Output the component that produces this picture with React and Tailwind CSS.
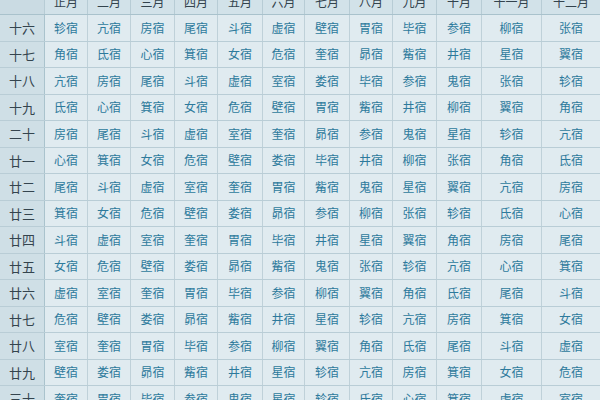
import React from 'react'

const months = ['正月', '二月', '三月', '四月', '五月', '六月', '七月', '八月', '九月', '十月', '十一月', '十二月']

const rows = [
  ['十六', '轸宿 亢宿 房宿 尾宿 斗宿 虚宿 壁宿 胃宿 毕宿 参宿 柳宿 张宿'],
  ['十七', '角宿 氐宿 心宿 箕宿 女宿 危宿 奎宿 昴宿 觜宿 井宿 星宿 翼宿'],
  ['十八', '亢宿 房宿 尾宿 斗宿 虚宿 室宿 娄宿 毕宿 参宿 鬼宿 张宿 轸宿'],
  ['十九', '氐宿 心宿 箕宿 女宿 危宿 壁宿 胃宿 觜宿 井宿 柳宿 翼宿 角宿'],
  ['二十', '房宿 尾宿 斗宿 虚宿 室宿 奎宿 昴宿 参宿 鬼宿 星宿 轸宿 亢宿'],
  ['廿一', '心宿 箕宿 女宿 危宿 壁宿 娄宿 毕宿 井宿 柳宿 张宿 角宿 氐宿'],
  ['廿二', '尾宿 斗宿 虚宿 室宿 奎宿 胃宿 觜宿 鬼宿 星宿 翼宿 亢宿 房宿'],
  ['廿三', '箕宿 女宿 危宿 壁宿 娄宿 昴宿 参宿 柳宿 张宿 轸宿 氐宿 心宿'],
  ['廿四', '斗宿 虚宿 室宿 奎宿 胃宿 毕宿 井宿 星宿 翼宿 角宿 房宿 尾宿'],
  ['廿五', '女宿 危宿 壁宿 娄宿 昴宿 觜宿 鬼宿 张宿 轸宿 亢宿 心宿 箕宿'],
  ['廿六', '虚宿 室宿 奎宿 胃宿 毕宿 参宿 柳宿 翼宿 角宿 氐宿 尾宿 斗宿'],
  ['廿七', '危宿 壁宿 娄宿 昴宿 觜宿 井宿 星宿 轸宿 亢宿 房宿 箕宿 女宿'],
  ['廿八', '室宿 奎宿 胃宿 毕宿 参宿 柳宿 翼宿 角宿 氐宿 尾宿 斗宿 虚宿'],
  ['廿九', '壁宿 娄宿 昴宿 觜宿 井宿 星宿 轸宿 亢宿 房宿 箕宿 女宿 危宿'],
  ['三十', '奎宿 胃宿 毕宿 参宿 鬼宿 星宿 轸宿 氐宿 心宿 箕宿 虚宿 室宿'],
]

const cols = 'grid grid-cols-[45px_43px_43px_44px_43px_45px_42px_45px_43px_44px_45px_60px_58px]'

export default function App() {
  return (
    <div
      className="w-[600px] h-[400px] overflow-hidden bg-[#e0ebf0]"
      style={{ fontFamily: '"Noto Sans CJK SC", "Noto Sans", sans-serif' }}
    >
      <div className="-mt-[11px]">
        {/* header */}
        <div className={`${cols} h-[26px] bg-[#d2e2e9] border-b border-[#a9c2cc]`}>
          <div className="border-r border-[#b7ccd5] bg-[#cadbe3]" />
          {months.map((m) => (
            <div
              key={m}
              className="flex items-center justify-center border-r border-[#b7ccd5] text-[12px] text-[#33434d] last:border-r-0"
            >
              {m}
            </div>
          ))}
        </div>

        {rows.map(([day, list]) => (
          <div key={day} className={`${cols} h-[26.5px] border-b border-[#b9cdd6]`}>
            <div className="flex items-center justify-center bg-[#cfdfe6] border-r border-[#aac3cd] text-[13px] text-[#34444e]">
              {day}
            </div>
            {list.split(' ').map((s, i) => (
              <div
                key={i}
                className="flex items-center justify-center bg-[#e0ebf0] border-r border-[#bfd1d9] text-[12px] text-[#2d7a9c] last:border-r-0"
              >
                {s}
              </div>
            ))}
          </div>
        ))}
      </div>
    </div>
  )
}
